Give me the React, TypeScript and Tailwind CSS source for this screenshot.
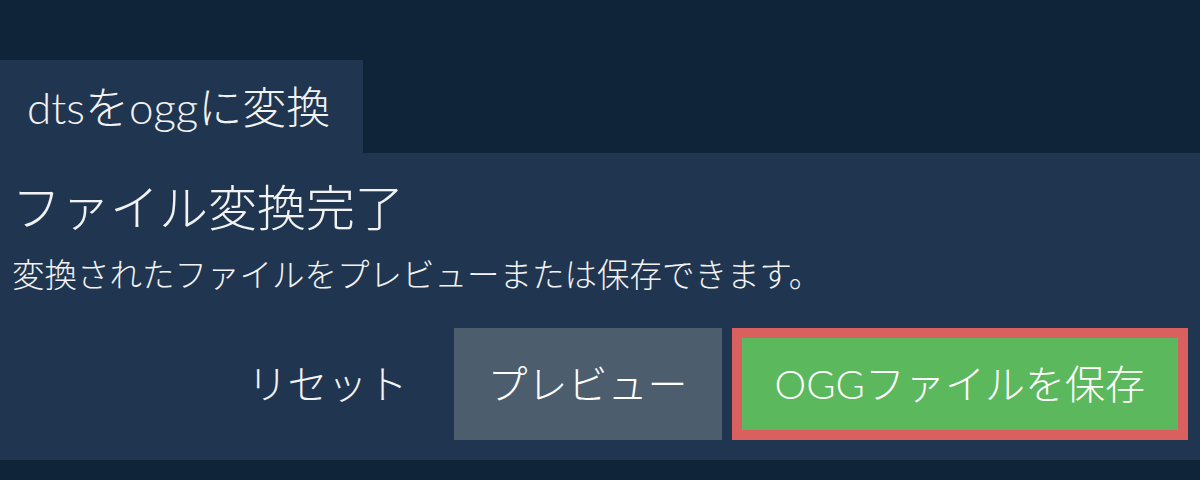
export default function App() {
  return (
    <div
      className="h-[480px] w-[1200px] bg-[#0f2339] pt-[60px] text-[#f2f2f2]"
      style={{ fontFamily: 'Lato, "Noto Sans CJK JP", sans-serif' }}
    >
      <div className="inline-flex h-[93px] w-[363px] items-center bg-[#203650] pl-[27px] text-[44px] font-light">
        dtsをoggに変換
      </div>
      <div className="h-[307px] bg-[#203650] px-[12px] pt-[24px] font-light">
        <h1 className="text-[49px] leading-[60px]">ファイル変換完了</h1>
        <p className="mt-[18px] text-[32.5px] leading-[40px]">
          変換されたファイルをプレビューまたは保存できます。
        </p>
        <div className="mt-[33px] flex justify-end gap-[10px]">
          <button className="h-[112px] px-[36px] text-[40px]">リセット</button>
          <button className="h-[112px] bg-[#4c5d6e] px-[34px] text-[40px] text-white">
            プレビュー
          </button>
          <button className="h-[112px] border-[10px] border-[#d9605e] bg-[#5cb85c] px-[33px] text-[40px] text-white">
            OGGファイルを保存
          </button>
        </div>
      </div>
    </div>
  );
}
